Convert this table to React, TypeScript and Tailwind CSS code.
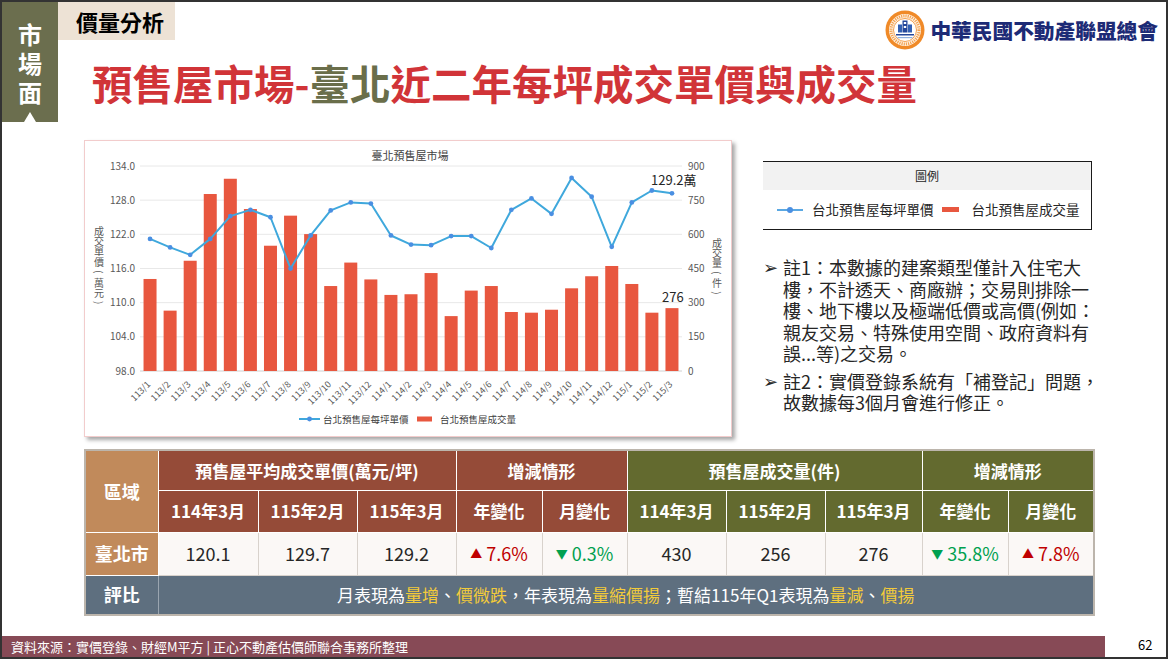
import React from 'react'

const months = [
  ...Array.from({ length: 12 }, (_, i) => `113/${i + 1}`),
  ...Array.from({ length: 12 }, (_, i) => `114/${i + 1}`),
  ...Array.from({ length: 3 }, (_, i) => `115/${i + 1}`),
]

// 每坪單價 (萬元) and 成交量 (件), read off the chart
const price = [
  121.2, 119.7, 118.4, 121.2, 125.2, 126.3, 125.0, 116.0, 121.8, 126.2, 127.6, 127.4,
  121.8, 120.2, 120.1, 121.7, 121.7, 119.6, 126.3, 128.3, 125.6, 131.9, 128.6, 119.8,
  127.6, 129.7, 129.2,
]
const volume = [
  404, 265, 484, 777, 844, 711, 550, 682, 601, 373, 476, 402,
  334, 337, 430, 241, 353, 373, 259, 256, 269, 363, 416, 461,
  382, 256, 276,
]

const leftTitle = ['成', '交', '單', '價', '(', '萬', '元', ')']
const rightTitle = ['成', '交', '量', '(', '件', ')']

function VerticalTitle({ chars, x, y0, gap }: { chars: string[]; x: number; y0: number; gap: number }) {
  return (
    <g>
      {chars.map((c, k) => {
        const y = y0 + k * gap
        const paren = c === '(' || c === ')'
        return (
          <text
            key={k}
            x={x}
            y={y}
            textAnchor="middle"
            dominantBaseline="central"
            fontSize="10"
            fill="#595959"
            transform={paren ? `rotate(90 ${x} ${y})` : undefined}
          >
            {c}
          </text>
        )
      })}
    </g>
  )
}

function PresaleChart() {
  const L = 55
  const R = 597
  const T = 25
  const B = 230
  const step = (R - L) / months.length
  const cx = (i: number) => L + step * (i + 0.5)
  const py = (v: number) => B - ((v - 98) / 36) * (B - T)
  const vy = (v: number) => B - (v / 900) * (B - T)
  const font = "'Noto Sans CJK TC', sans-serif"

  return (
    <svg width="646" height="295" className="block" fontFamily={font}>
      <text x="325" y="19" textAnchor="middle" fontSize="11" fill="#404040">
        臺北預售屋市場
      </text>

      {[0, 1, 2, 3, 4, 5, 6].map((k) => {
        const y = T + (k * (B - T)) / 6
        return (
          <g key={k}>
            <line x1={L} x2={R} y1={y} y2={y} stroke={k === 6 ? '#d0d0d0' : '#e8e8e8'} strokeWidth="1" />
            <text x="50" y={y + 3.5} textAnchor="end" fontSize="10" fill="#595959">
              {(134 - k * 6).toFixed(1)}
            </text>
            <text x="603" y={y + 3.5} fontSize="10" fill="#595959">
              {900 - k * 150}
            </text>
          </g>
        )
      })}

      {volume.map((v, i) => (
        <rect key={i} x={cx(i) - 6.5} y={vy(v)} width="13" height={B - vy(v)} fill="#e8573f" />
      ))}

      <polyline
        points={price.map((v, i) => `${cx(i)},${py(v)}`).join(' ')}
        fill="none"
        stroke="#3fa8dc"
        strokeWidth="2"
        strokeLinejoin="round"
      />
      {price.map((v, i) => (
        <circle key={i} cx={cx(i)} cy={py(v)} r="2.4" fill="#4a8fe2" />
      ))}

      {months.map((m, i) => (
        <text
          key={m}
          x={cx(i) + 1}
          y={244}
          textAnchor="end"
          fontSize="9"
          fill="#595959"
          transform={`rotate(-45 ${cx(i) + 1} 244)`}
        >
          {m}
        </text>
      ))}

      <VerticalTitle chars={leftTitle} x={14} y0={89} gap={10.4} />
      <VerticalTitle chars={rightTitle} x={632} y0={101} gap={10.2} />

      <text x="566" y="44" fontSize="13" fill="#262626">
        129.2萬
      </text>
      <text x="577" y="161" fontSize="13" fill="#262626">
        276
      </text>

      <line x1="214" x2="235" y1="278" y2="278" stroke="#3fa8dc" strokeWidth="2" />
      <circle cx="224.5" cy="278" r="2.4" fill="#4a8fe2" />
      <text x="238" y="281.5" fontSize="9.5" fill="#404040">
        台北預售屋每坪單價
      </text>
      <rect x="332" y="275.5" width="15" height="5" fill="#e8573f" />
      <text x="355" y="281.5" fontSize="9.5" fill="#404040">
        台北預售屋成交量
      </text>
    </svg>
  )
}

function Logo() {
  return (
    <svg width="40" height="40" viewBox="0 0 40 40">
      <circle cx="20" cy="20" r="19.5" fill="#f08a28" />
      <circle cx="20" cy="20" r="16" fill="#fff4e6" />
      <circle cx="20" cy="20" r="14" fill="none" stroke="#f3a252" strokeWidth="3" strokeDasharray="1.2 1" />
      <circle cx="20" cy="20" r="11.5" fill="#ffffff" stroke="#f08a28" strokeWidth="0.8" />
      <rect x="17.5" y="10.5" width="5" height="12" fill="#25479a" />
      <rect x="13" y="14.5" width="4" height="8" fill="#3461b3" />
      <rect x="23" y="14.5" width="4" height="8" fill="#3461b3" />
      <path d="M18.8 12 h2.4 v2 h-2.4z M18.8 16 h2.4 v2 h-2.4z" fill="#ffffff" />
      <path d="M11 24 h18 v1.5 h-18z" fill="#25479a" />
      <path d="M12.5 27 h15 v1.2 h-15z" fill="#8fb0de" />
    </svg>
  )
}

const hi = 'text-[#f3cb3a]'
const headCell = 'border border-white text-white font-bold text-[17px] text-center'
const dataCell = 'border border-[#d8d2cc] bg-[#fbf8f6] text-[18px] text-center text-[#262626]'
const upCell = 'border border-[#d8d2cc] bg-[#fbf8f6] text-[18px] text-center text-[#c00000]'
const downCell = 'border border-[#d8d2cc] bg-[#fbf8f6] text-[18px] text-center text-[#00a04f]'

export default function App() {
  return (
    <div className="w-[1168px] h-[659px] border-2 border-[#333333] bg-white flex flex-col overflow-hidden font-['Noto_Sans_CJK_TC',sans-serif] text-[#262626]">
      <header className="flex h-[120px] shrink-0">
        <div className="w-[56px] bg-[#6b6e4e] flex flex-col items-center pt-[17px] text-white text-[24px] font-bold leading-[29px]">
          <span>市</span>
          <span>場</span>
          <span>面</span>
          <span className="mt-auto w-0 h-0 border-x-[6px] border-x-transparent border-b-[10px] border-b-white" />
        </div>
        <div className="flex-1 flex flex-col">
          <div className="flex justify-between h-[38px]">
            <div className="w-[117px] bg-[#ede2d5] flex items-center pl-[18px] text-[22px] font-bold text-black">
              價量分析
            </div>
            <div className="flex items-center gap-[5px] mt-[8px] mr-[8px] h-[40px]">
              <Logo />
              <span className="text-[20.7px] font-black text-[#1d2b76] leading-none whitespace-nowrap">
                中華民國不動產聯盟總會
              </span>
            </div>
          </div>
          <h1 className="mt-[21px] ml-[34px] text-[40.5px] leading-[44px] font-bold text-[#d13438] whitespace-nowrap">
            預售屋市場-<span className="text-[#6a6e4a]">臺北</span>近二年每坪成交單價與成交量
          </h1>
        </div>
      </header>

      <div className="flex mt-[18px] ml-[82px] shrink-0">
        <div className="w-[648px] h-[297px] border border-[#f2cccc] bg-white shadow-[3px_3px_4px_rgba(0,0,0,0.35)]">
          <PresaleChart />
        </div>
        <div className="ml-[31px] w-[329px]">
          <div className="mt-[21px] border-t border-r border-b border-[#1a1a1a]">
            <div className="h-[28px] bg-[#f2f2f2] flex items-center justify-center text-[12px] text-[#262626]">圖例</div>
            <div className="h-[39px] flex items-center pl-[14px] text-[13.5px] text-[#262626] whitespace-nowrap">
              <span className="w-[26px] h-[2px] bg-[#5aa8e2] flex items-center justify-center">
                <span className="w-[6px] h-[6px] rounded-full bg-[#4a8fe2]" />
              </span>
              <span className="ml-[9px]">台北預售屋每坪單價</span>
              <span className="ml-[8px] w-[17px] h-[5px] bg-[#e8573f]" />
              <span className="ml-[13px]">台北預售屋成交量</span>
            </div>
          </div>

          <div className="mt-[27px] text-[18px] leading-[21.5px] text-[#262626] whitespace-nowrap">
            <div className="flex">
              <span className="w-[20px] shrink-0 text-[18px] font-['DejaVu_Sans',sans-serif]">➢</span>
              <p>
                註1：本數據的建案類型僅計入住宅大
                <br />
                樓，不計透天、商廠辦；交易則排除一
                <br />
                樓、地下樓以及極端低價或高價(例如：
                <br />
                親友交易、特殊使用空間、政府資料有
                <br />
                誤...等)之交易。
              </p>
            </div>
            <div className="flex mt-[6px]">
              <span className="w-[20px] shrink-0 text-[18px] font-['DejaVu_Sans',sans-serif]">➢</span>
              <p>
                註2：實價登錄系統有「補登記」問題，
                <br />
                故數據每3個月會進行修正。
              </p>
            </div>
          </div>
        </div>
      </div>

      <table className="mt-[12px] ml-[82px] w-[1009px] table-fixed border-collapse border-2 border-[#bcb5ac] shrink-0">
        <colgroup>
          <col className="w-[73px]" />
          <col className="w-[100px]" />
          <col className="w-[99px]" />
          <col className="w-[99px]" />
          <col className="w-[86px]" />
          <col className="w-[85px]" />
          <col className="w-[99px]" />
          <col className="w-[99px]" />
          <col className="w-[97px]" />
          <col className="w-[86px]" />
          <col className="w-[86px]" />
        </colgroup>
        <tbody>
          <tr className="h-[40px]">
            <td rowSpan={2} className="border border-white bg-[#c18a5b] text-white font-bold text-[18px] text-center">區域</td>
            <td colSpan={3} className={`${headCell} bg-[#954b38]`}>預售屋平均成交單價(萬元/坪)</td>
            <td colSpan={2} className={`${headCell} bg-[#954b38]`}>增減情形</td>
            <td colSpan={3} className={`${headCell} bg-[#636a2f]`}>預售屋成交量(件)</td>
            <td colSpan={2} className={`${headCell} bg-[#636a2f]`}>增減情形</td>
          </tr>
          <tr className="h-[42px]">
            <td className={`${headCell} bg-[#954b38]`}>114年3月</td>
            <td className={`${headCell} bg-[#954b38]`}>115年2月</td>
            <td className={`${headCell} bg-[#954b38]`}>115年3月</td>
            <td className={`${headCell} bg-[#954b38]`}>年變化</td>
            <td className={`${headCell} bg-[#954b38]`}>月變化</td>
            <td className={`${headCell} bg-[#636a2f]`}>114年3月</td>
            <td className={`${headCell} bg-[#636a2f]`}>115年2月</td>
            <td className={`${headCell} bg-[#636a2f]`}>115年3月</td>
            <td className={`${headCell} bg-[#636a2f]`}>年變化</td>
            <td className={`${headCell} bg-[#636a2f]`}>月變化</td>
          </tr>
          <tr className="h-[43px]">
            <td className="border border-white bg-[#c18a5b] text-white font-bold text-[18px] text-center">臺北市</td>
            <td className={dataCell}>120.1</td>
            <td className={dataCell}>129.7</td>
            <td className={dataCell}>129.2</td>
            <td className={upCell}>
              <span className="text-[12px] align-[2px]">▲</span> 7.6%
            </td>
            <td className={downCell}>
              <span className="text-[12px] align-[2px]">▼</span> 0.3%
            </td>
            <td className={dataCell}>430</td>
            <td className={dataCell}>256</td>
            <td className={dataCell}>276</td>
            <td className={downCell}>
              <span className="text-[12px] align-[2px]">▼</span> 35.8%
            </td>
            <td className={upCell}>
              <span className="text-[12px] align-[2px]">▲</span> 7.8%
            </td>
          </tr>
          <tr className="h-[40px]">
            <td className="border border-[#9aa5b0] bg-[#5e6f7f] text-white font-bold text-[18px] text-center">評比</td>
            <td colSpan={10} className="border border-[#9aa5b0] bg-[#5e6f7f] text-white text-[17px] text-center">
              月表現為<span className={hi}>量增</span>、<span className={hi}>價微跌</span>，年表現為
              <span className={hi}>量縮價揚</span>；暫結115年Q1表現為<span className={hi}>量減</span>、
              <span className={hi}>價揚</span>
            </td>
          </tr>
        </tbody>
      </table>

      <footer className="mt-auto flex items-center h-[21px] shrink-0">
        <div className="w-[1103px] h-full bg-[#874a56] flex items-center pl-[9px] text-white text-[13px] whitespace-nowrap">
          資料來源：實價登錄、財經M平方 | 正心不動產估價師聯合事務所整理
        </div>
        <span className="ml-[33px] pb-[3px] text-[13px] text-black">62</span>
      </footer>
    </div>
  )
}
